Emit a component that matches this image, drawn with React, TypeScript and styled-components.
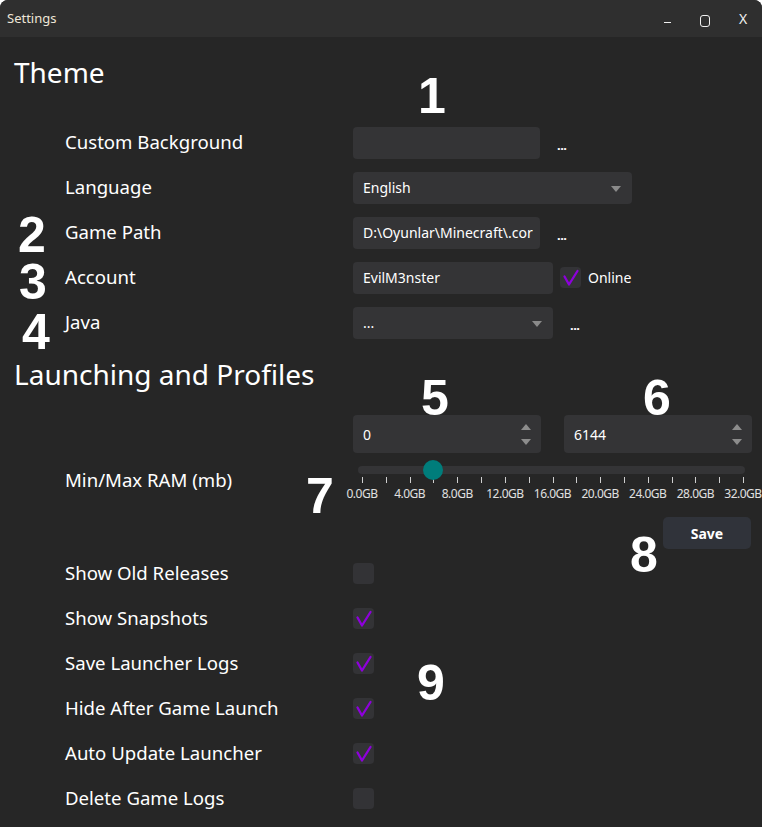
import React from 'react';
import styled, { createGlobalStyle } from 'styled-components';

const GlobalStyle = createGlobalStyle`
    body {
        margin: 0;
        background: #ffffff;
    }
`;

const Window = styled.div`
    position: relative;
    width: 762px;
    height: 827px;
    background: #262626;
    border-radius: 8px 8px 0 0;
    overflow: hidden;
    font-family: 'Noto Sans', 'Open Sans', sans-serif;
    color: #ffffff;
`;

const TitleBar = styled.div`
    height: 37px;
    display: flex;
    align-items: center;
    padding-left: 7px;
    background: #2f2f2f;
    font-size: 13px;
    color: #eee6d8;
`;

const TitleText = styled.span`
    flex: 1;
    margin-top: -2px;
`;

const TitleButton = styled.div`
    width: 38px;
    height: 37px;
    display: flex;
    align-items: center;
    justify-content: center;
    font-size: 14px;
    color: #f0f0f0;
`;

const MinIcon = styled.div`
    width: 7px;
    height: 1px;
    margin-top: 7px;
    background: #f0f0f0;
`;

const MaxIcon = styled.div`
    width: 8px;
    height: 10px;
    margin-top: 4px;
    border: 1.5px solid #f0f0f0;
    border-radius: 3px;
`;

const Content = styled.div`
    padding: 0 11px 0 14px;
`;

const Heading = styled.h1<{ $top: number; $bottom: number }>`
    margin: ${p => p.$top}px 0 ${p => p.$bottom}px;
    height: 36px;
    line-height: 34px;
    font-size: 28px;
    font-weight: 400;
`;

const Row = styled.div`
    display: grid;
    grid-template-columns: 288px 1fr;
    align-items: center;
    height: 45px;
    padding-left: 51px;
`;

const Label = styled.span`
    font-size: 18.6px;
    line-height: 23px;
    margin-bottom: 2px;
`;

const Controls = styled.div`
    display: flex;
    align-items: center;
`;

const Field = styled.div<{ $w: number; $h?: number }>`
    box-sizing: border-box;
    position: relative;
    width: ${p => p.$w}px;
    height: ${p => p.$h || 32}px;
    padding: 0 26px 0 10px;
    display: flex;
    align-items: center;
    background: #343436;
    border-radius: 4px;
    font-size: 14px;
    white-space: nowrap;
    overflow: hidden;
`;

const Clip = styled.span`
    overflow: hidden;
    margin-right: -22px;
`;

const DropArrow = styled.span`
    position: absolute;
    right: 11px;
    top: 50%;
    margin-top: -2px;
    width: 0;
    height: 0;
    border-left: 5px solid transparent;
    border-right: 5px solid transparent;
    border-top: 6px solid #8a8a8a;
`;

const Browse = styled.span<{ $gap: number }>`
    margin-left: ${p => p.$gap}px;
    margin-top: 4px;
    font-size: 13px;
    font-weight: 700;
    letter-spacing: -0.5px;
`;

const Spacer = styled.span`
    width: 7px;
`;

const Box = styled.div`
    width: 21px;
    height: 21px;
    border-radius: 4px;
    background: #333336;
    display: flex;
    align-items: center;
    justify-content: center;
`;

const OnlineText = styled.span`
    margin-left: 7px;
    font-size: 14px;
`;

const SpinArrows = styled.div`
    position: absolute;
    right: 10px;
    top: 0;
    bottom: 0;
    display: flex;
    flex-direction: column;
    justify-content: space-between;
    padding: 9px 0 8px;
`;

const UpArrow = styled.span`
    width: 0;
    height: 0;
    border-left: 5px solid transparent;
    border-right: 5px solid transparent;
    border-bottom: 6px solid #8c8c8c;
`;

const DownArrow = styled.span`
    width: 0;
    height: 0;
    border-left: 5px solid transparent;
    border-right: 5px solid transparent;
    border-top: 6px solid #8c8c8c;
`;

const RamRow = styled.div`
    display: grid;
    grid-template-columns: 288px 1fr;
    padding-left: 51px;
`;

const RamLabel = styled(Label)`
    margin-top: 53px;
`;

const RamBlock = styled.div`
    display: flex;
    flex-direction: column;
`;

const SpinRow = styled.div`
    display: flex;
    gap: 23px;
`;

const Track = styled.div`
    position: relative;
    width: 387px;
    height: 8px;
    margin: 13px 0 0 5px;
    background: #343436;
    border-radius: 4px;
`;

const Thumb = styled.div`
    position: absolute;
    top: -6px;
    width: 20px;
    height: 20px;
    margin-left: -10px;
    border-radius: 50%;
    background: #007d7b;
`;

const Ticks = styled.div`
    display: flex;
    justify-content: space-between;
    width: 382px;
    margin: 3px 0 0 9px;
`;

const Tick = styled.span`
    width: 1px;
    height: 6px;
    background: #cfcfcf;
`;

const TickLabels = styled.div`
    display: flex;
    justify-content: space-between;
    width: 421px;
    margin: 4px 0 0 -11px;
`;

const TickLabel = styled.span`
    width: 40px;
    text-align: center;
    font-size: 12px;
    line-height: 13px;
    color: #e0e0e0;
    letter-spacing: -0.5px;
    white-space: nowrap;
`;

const SaveRow = styled.div`
    display: flex;
    justify-content: flex-end;
    margin: 17px 0 2px;
`;

const SaveButton = styled.button`
    width: 88px;
    height: 32px;
    border: none;
    border-radius: 5px;
    background: #30333a;
    color: #ffffff;
    font-family: 'Noto Sans', sans-serif;
    font-size: 14px;
    font-weight: 700;
`;

const Marker = styled.span<{ $x: number; $y: number }>`
    position: absolute;
    left: ${p => p.$x}px;
    top: ${p => p.$y}px;
    font-family: 'Liberation Sans', Arial, sans-serif;
    font-size: 50px;
    font-weight: 700;
    line-height: 30px;
    color: #ffffff;
`;

const Check = ({ on }: { on?: boolean }) => (
    <Box>
        {on && (
            <svg width="21" height="21" viewBox="0 0 21 21">
                <path d="M4.5 9.5 L9 17.5 L17.5 4" fill="none" stroke="#8e00dc" strokeWidth="2.3" strokeLinecap="round" strokeLinejoin="round" />
            </svg>
        )}
    </Box>
);

const Spin = ({ value }: { value: string }) => (
    <Field $w={188} $h={38}>
        {value}
        <SpinArrows>
            <UpArrow />
            <DownArrow />
        </SpinArrows>
    </Field>
);

const gbLabels = ['0.0GB', '4.0GB', '8.0GB', '12.0GB', '16.0GB', '20.0GB', '24.0GB', '28.0GB', '32.0GB'];
const toggles: [string, boolean][] = [
    ['Show Old Releases', false],
    ['Show Snapshots', true],
    ['Save Launcher Logs', true],
    ['Hide After Game Launch', true],
    ['Auto Update Launcher', true],
    ['Delete Game Logs', false],
];

// annotation numbers drawn over the screenshot
const markers: [string, number, number][] = [
    ['1', 418, 81],
    ['2', 18, 220],
    ['3', 19, 267],
    ['4', 22, 317],
    ['5', 421, 383],
    ['6', 643, 383],
    ['7', 306, 481],
    ['8', 630, 540],
    ['9', 417, 668],
];

const App = () => {
    const ram = 6144;
    const pct = ram / 32768;
    return (
        <Window>
            <GlobalStyle />
            <TitleBar>
                <TitleText>Settings</TitleText>
                <TitleButton><MinIcon /></TitleButton>
                <TitleButton><MaxIcon /></TitleButton>
                <TitleButton>X</TitleButton>
            </TitleBar>
            <Content>
                <Heading $top={18} $bottom={29}>Theme</Heading>
                <Row>
                    <Label>Custom Background</Label>
                    <Controls>
                        <Field $w={187} />
                        <Browse $gap={17}>...</Browse>
                    </Controls>
                </Row>
                <Row>
                    <Label>Language</Label>
                    <Controls>
                        <Field $w={279}>
                            English
                            <DropArrow />
                        </Field>
                    </Controls>
                </Row>
                <Row>
                    <Label>Game Path</Label>
                    <Controls>
                        <Field $w={187}>
                            <Clip>D:\Oyunlar\Minecraft\.cor</Clip>
                        </Field>
                        <Browse $gap={17}>...</Browse>
                    </Controls>
                </Row>
                <Row>
                    <Label>Account</Label>
                    <Controls>
                        <Field $w={200}>EvilM3nster</Field>
                        <Spacer />
                        <Check on />
                        <OnlineText>Online</OnlineText>
                    </Controls>
                </Row>
                <Row>
                    <Label>Java</Label>
                    <Controls>
                        <Field $w={200}>
                            ...
                            <DropArrow />
                        </Field>
                        <Browse $gap={17}>...</Browse>
                    </Controls>
                </Row>

                <Heading $top={12} $bottom={22}>Launching and Profiles</Heading>
                <RamRow>
                    <RamLabel>Min/Max RAM (mb)</RamLabel>
                    <RamBlock>
                        <SpinRow>
                            <Spin value="0" />
                            <Spin value={String(ram)} />
                        </SpinRow>
                        <Track>
                            <Thumb style={{ left: 4 + pct * 381 }} />
                        </Track>
                        <Ticks>
                            {Array.from({ length: 17 }).map((_, i) => (
                                <Tick key={i} />
                            ))}
                        </Ticks>
                        <TickLabels>
                            {gbLabels.map(l => (
                                <TickLabel key={l}>{l}</TickLabel>
                            ))}
                        </TickLabels>
                    </RamBlock>
                </RamRow>
                <SaveRow>
                    <SaveButton>Save</SaveButton>
                </SaveRow>
                {toggles.map(([label, on]) => (
                    <Row key={label}>
                        <Label>{label}</Label>
                        <Controls>
                            <Check on={on} />
                        </Controls>
                    </Row>
                ))}
            </Content>
            {markers.map(([n, x, y]) => (
                <Marker key={n} $x={x} $y={y}>
                    {n}
                </Marker>
            ))}
        </Window>
    );
};

export default App;
